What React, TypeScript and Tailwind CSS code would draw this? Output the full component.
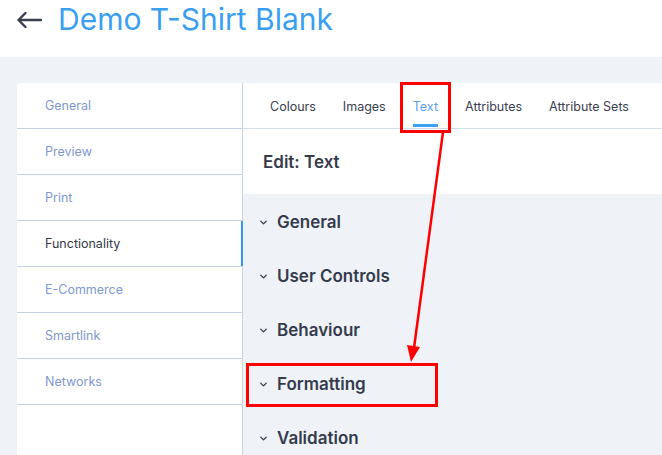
import { ChevronDown } from 'lucide-react';

const sideItems = ['General', 'Preview', 'Print', 'Functionality', 'E-Commerce', 'Smartlink', 'Networks'];
const tabs = ['Colours', 'Images', 'Text', 'Attributes', 'Attribute Sets'];
const sections = ['General', 'User Controls', 'Behaviour', 'Formatting', 'Validation'];

export default function App() {
  return (
    <div className="relative h-screen w-full overflow-hidden bg-[#eff3f7]" style={{ fontFamily: 'Inter, "Noto Sans", sans-serif' }}>
      {/* header */}
      <div className="flex h-[57px] items-start bg-white pl-[16px] pt-[4px]">
        <svg className="mt-[7px]" width="27" height="18" viewBox="0 0 27 18" fill="none" stroke="#3a404d" strokeWidth="2.4" strokeLinecap="round" strokeLinejoin="round">
          <path d="M25 9H2.5M9.5 2L2.5 9L9.5 16" />
        </svg>
        <h1 className="ml-[15px] text-[30px] leading-none text-[#3a9ff3]">Demo T-Shirt Blank</h1>
      </div>

      <div className="flex pl-[17px] pt-[26px]">
        {/* sidebar */}
        <div className="h-[372px] w-[226px] shrink-0 rounded-tl-sm border-r border-[#c5d3e3] bg-white">
          {sideItems.map((item) => {
            const active = item === 'Functionality';
            return (
              <div
                key={item}
                className={
                  'relative flex h-[46px] items-center border-b border-[#c5d3e3] pl-[28px] pt-[2px] text-[12.5px] ' +
                  (active ? 'text-[#333a48]' : 'text-[#7f98cf]')
                }
              >
                {item}
                {active && <div className="absolute right-[-1px] top-0 h-full w-[2px] bg-[#2f9bf2]" />}
              </div>
            );
          })}
        </div>

        {/* main panel */}
        <div className="flex-1">
          <div className="flex h-[46px] items-center gap-[27px] border-b border-[#d3dde8] bg-white pl-[27px]">
            {tabs.map((t) => {
              const active = t === 'Text';
              return (
                <div key={t} className={'relative flex h-full items-center pt-[3px] text-[12.5px] ' + (active ? 'text-[#5b9ff0]' : 'text-[#3a4050]')}>
                  {t}
                  {active && <div className="absolute bottom-[1px] left-0 h-[3px] w-full bg-[#3ba0f2]" />}
                </div>
              );
            })}
          </div>
          <div className="flex h-[65px] items-center bg-white pl-[20px] pt-[3px] text-[17px] font-semibold text-[#353b4b]">Edit: Text</div>
          <div>
            {sections.map((s) => (
              <div key={s} className="flex h-[54px] items-center pl-[15px] pt-[3px] text-[17px] font-semibold text-[#343b4d]">
                <ChevronDown className="mr-[8px] h-[11px] w-[11px] text-[#343b4d]" strokeWidth={3} />
                {s}
              </div>
            ))}
          </div>
        </div>
      </div>

      {/* annotations */}
      <div className="absolute left-[400px] top-[82px] h-[51px] w-[51px] border-[3px] border-[#ff0000]" />
      <div className="absolute left-[246px] top-[363px] h-[44px] w-[192px] border-[3px] border-[#ff0000]" />
      <svg className="absolute left-0 top-0" width="662" height="455">
        <line x1="443" y1="132" x2="414" y2="348" stroke="#ff0000" strokeWidth="2.5" />
        <polygon points="407,345 420,347 411,362" fill="#ff0000" />
      </svg>
    </div>
  );
}
